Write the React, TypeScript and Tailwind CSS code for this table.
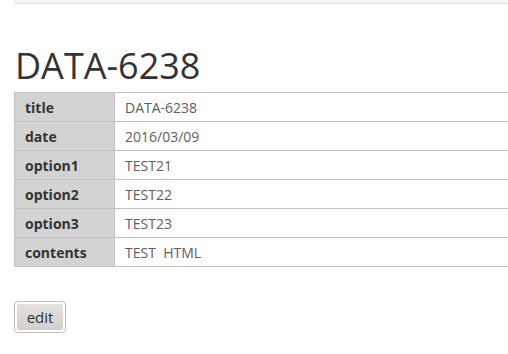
const rows: [string, string][] = [
  ["title", "DATA-6238"],
  ["date", "2016/03/09"],
  ["option1", "TEST21"],
  ["option2", "TEST22"],
  ["option3", "TEST23"],
  ["contents", "TEST  HTML"],
];

export default function App() {
  return (
    <div className="h-[354px] w-[508px] overflow-hidden bg-white pl-[14px] font-['Open_Sans',sans-serif] text-[#333]">
      {/* well bar, scrolled mostly out of view */}
      <div className="h-[4px] w-[520px] rounded-bl-[4px] border-b border-l border-[#e3e3e3] bg-[#f5f5f5]" />

      <h1 className="mt-[42px] mb-[6px] pl-px text-[36px] leading-[40px] font-normal">DATA-6238</h1>

      <div className="w-[520px] border-t border-l border-[#c2c2c2]">
        {rows.map(([label, value]) => (
          <div key={label} className="flex h-[29px] border-b border-[#c2c2c2]">
            <div className="flex w-[100px] items-center border-r border-[#c2c2c2] bg-[#d3d3d3] pl-[10px] text-[14px] font-bold">
              {label}
            </div>
            <div className="flex flex-1 items-center pl-[10px] text-[14px] whitespace-pre text-[#606060]">
              {value}
            </div>
          </div>
        ))}
      </div>

      <button className="mt-[34px] block h-[32px] w-[52px] rounded-[4px] border border-[#bdbdbd] bg-white p-[2px]">
        <span className="flex h-full w-full items-center justify-center rounded-[2px] bg-gradient-to-b from-[#e4e2e0] to-[#d2cfcc] text-[15px] text-[#333]">
          edit
        </span>
      </button>
    </div>
  );
}
